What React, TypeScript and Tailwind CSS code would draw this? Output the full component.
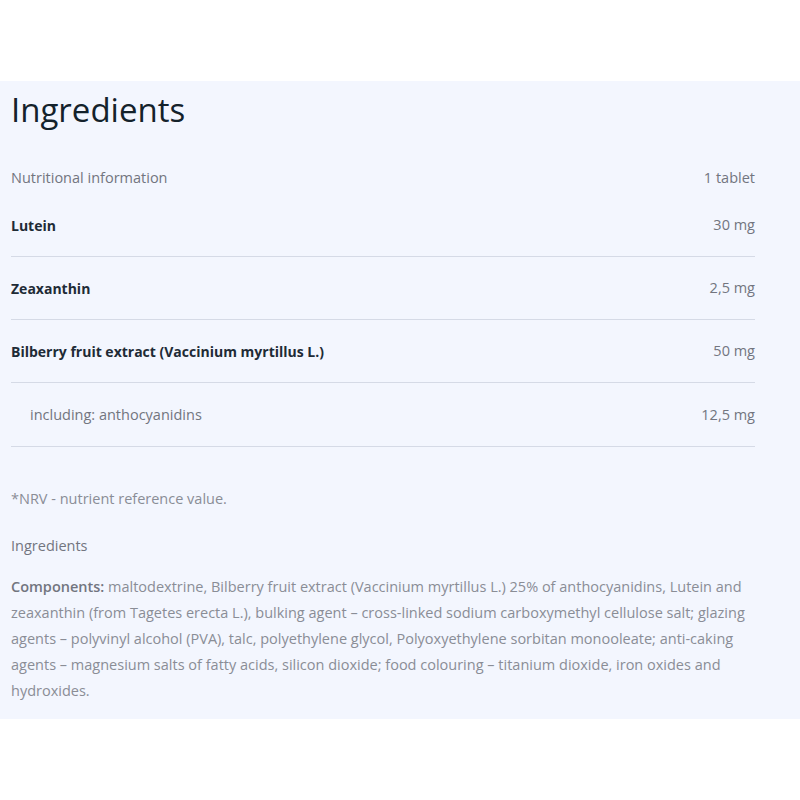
import React from "react";

const rows = [
  { name: "Lutein", amount: "30 mg", bold: true },
  { name: "Zeaxanthin", amount: "2,5 mg", bold: true },
  { name: "Bilberry fruit extract (Vaccinium myrtillus L.)", amount: "50 mg", bold: true },
  { name: "including: anthocyanidins", amount: "12,5 mg", bold: false }
];

export default function App() {
  return <div className="min-h-[800px] bg-white pt-[81px]" style={{ fontFamily: "'Open Sans', 'Noto Sans', sans-serif" }}>
      <section className="bg-[#f3f6fe] pl-[11px] pr-[45px] pt-[9px] pb-[15px]">
        <h2 className="text-[33px] leading-[40px] text-[#14222b] font-normal">Ingredients</h2>
        <div className="mt-[32px]">
          <div className="flex justify-between items-center h-8 text-[14.5px] text-[#72757f]">
            <span>Nutritional information</span>
            <span>1 tablet</span>
          </div>
          {rows.map((row, i) => <div key={row.name} className={`flex justify-between items-center ${i === rows.length - 1 ? "h-[64px]" : "h-[63px]"} border-b border-[#d5dae6]`}>
              <span className={row.bold ? "text-[14px] font-bold text-[#1e2b36]" : "pl-[19px] text-[14.5px] text-[#72757f]"}>
                {row.name}
              </span>
              <span className="text-[14.5px] text-[#72757f]">{row.amount}</span>
            </div>)}
        </div>
        <p className="mt-[42px] text-[14.5px] leading-5 text-[#8a8d96]">*NRV - nutrient reference value.</p>
        <p className="mt-[27px] text-[14.5px] leading-5 text-[#72757f]">Ingredients</p>
        <p className="mt-[18px] text-[14.5px] leading-[26px] text-[#8a8d96]">
          <span className="font-semibold text-[#72757f]">Components: </span>
          maltodextrine, Bilberry fruit extract (Vaccinium myrtillus L.) 25% of anthocyanidins, Lutein and zeaxanthin (from Tagetes erecta L.), bulking agent – cross-linked sodium carboxymethyl cellulose salt; glazing agents – polyvinyl alcohol (PVA), talc, polyethylene glycol, Polyoxyethylene sorbitan monooleate; anti-caking agents – magnesium salts of fatty acids, silicon dioxide; food colouring – titanium dioxide, iron oxides and hydroxides.
        </p>
      </section>
    </div>;
}
